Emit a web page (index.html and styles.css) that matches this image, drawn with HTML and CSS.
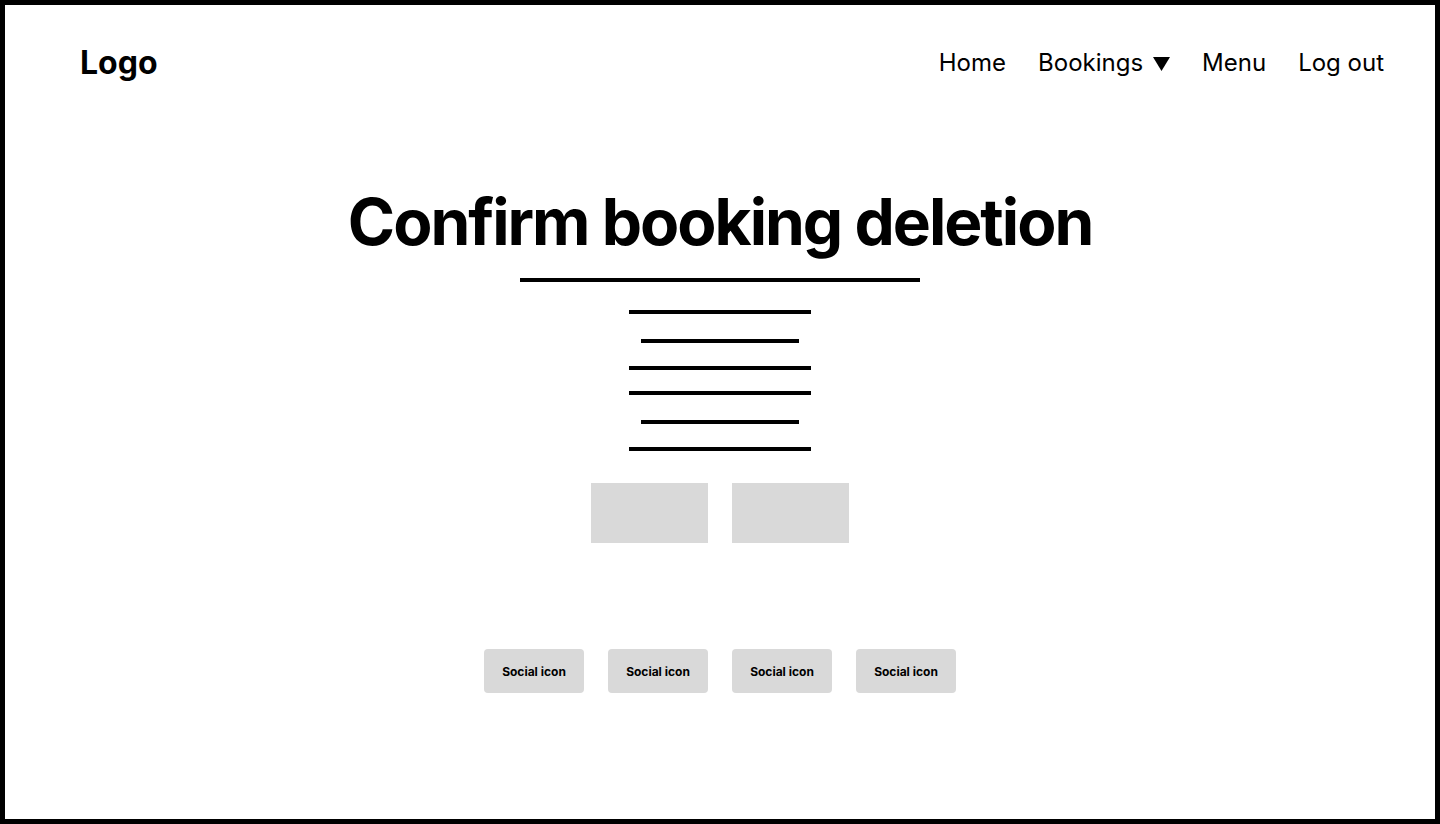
FILE: index.html
```html
<!DOCTYPE html>
<html lang="en">
<head>
<meta charset="utf-8">
<title>Confirm booking deletion</title>
<link rel="stylesheet" href="styles.css">
</head>
<body>
<div class="frame">
  <header class="header">
    <div class="logo">Logo</div>
    <nav class="nav">
      <a class="nav-item" href="#">Home</a>
      <a class="nav-item" href="#">Bookings <svg class="caret" width="17" height="14" viewBox="0 0 17 14"><polygon points="0,0 17,0 8.5,14" fill="#000"/></svg></a>
      <a class="nav-item" href="#">Menu</a>
      <a class="nav-item" href="#">Log out</a>
    </nav>
  </header>
  <main class="main">
    <h1 class="title">Confirm booking deletion</h1>
    <div class="underline"></div>
    <div class="lines">
      <div class="line long l1"></div>
      <div class="line short l2"></div>
      <div class="line long l3"></div>
      <div class="line long l4"></div>
      <div class="line short l5"></div>
      <div class="line long l6"></div>
    </div>
    <div class="actions">
      <div class="btn"></div>
      <div class="btn"></div>
    </div>
    <div class="socials">
      <div class="social">Social icon</div>
      <div class="social">Social icon</div>
      <div class="social">Social icon</div>
      <div class="social">Social icon</div>
    </div>
  </main>
</div>
</body>
</html>
```
FILE: styles.css
```css
* { box-sizing: border-box; }
html, body { margin: 0; padding: 0; }
body {
  font-family: Inter, "Liberation Sans", sans-serif;
  color: #000;
  background: #fff;
}
.frame {
  width: 1440px;
  height: 824px;
  border: 5px solid #000;
  display: flex;
  flex-direction: column;
}
.header {
  height: 114px;
  display: flex;
  align-items: center;
  justify-content: space-between;
  padding: 0 51px 0 75px;
}
.logo {
  font-size: 32px;
  font-weight: 700;
}
.nav {
  display: flex;
  align-items: center;
  gap: 32px;
}
.nav-item {
  font-size: 24px;
  color: #000;
  text-decoration: none;
  display: flex;
  align-items: center;
}
.caret {
  margin-left: 10px;
  margin-top: 3px;
}
.main {
  display: flex;
  flex-direction: column;
  align-items: center;
}
.title {
  margin: 64px 0 0;
  font-size: 64px;
  font-weight: 700;
  line-height: normal;
  letter-spacing: -2px;
}
.underline {
  width: 400px;
  height: 4px;
  background: #000;
  margin-top: 18px;
}
.lines {
  display: flex;
  flex-direction: column;
  align-items: center;
}
.line { height: 4px; background: #000; }
.line.long { width: 182px; }
.line.short { width: 158px; }
.l1 { margin-top: 28px; }
.l2 { margin-top: 25px; }
.l3 { margin-top: 23px; }
.l4 { margin-top: 21px; }
.l5 { margin-top: 25px; }
.l6 { margin-top: 23px; }
.actions {
  display: flex;
  gap: 24px;
  margin-top: 32px;
}
.btn {
  width: 117px;
  height: 60px;
  background: #d9d9d9;
}
.socials {
  display: flex;
  gap: 24px;
  margin-top: 106px;
}
.social {
  width: 100px;
  height: 44px;
  background: #d9d9d9;
  border-radius: 4px;
  display: flex;
  align-items: center;
  justify-content: center;
  font-size: 12px;
  font-weight: 700;
}
```
